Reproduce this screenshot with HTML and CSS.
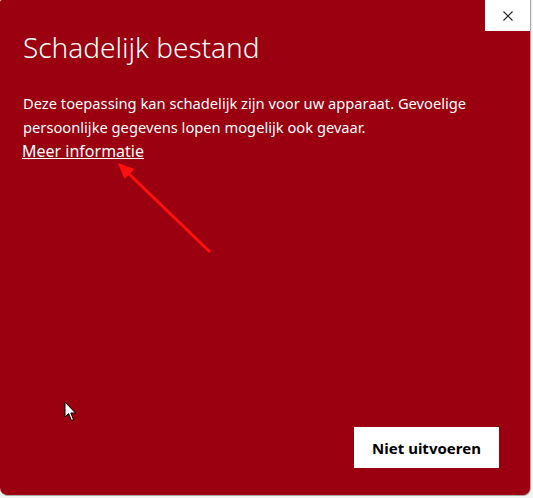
FILE: index.html
```html
<!DOCTYPE html>
<html lang="nl">
<head>
    <meta charset="UTF-8">
    <meta name="viewport" content="width=device-width, initial-scale=1.0">
    <title>Schadelijk bestand</title>
    <link rel="stylesheet" href="styles.css">
</head>
<body>
    <div class="dialog">
        <div class="titlebar">
            <button class="close-button" aria-label="Sluiten">
                <svg width="10" height="10" viewBox="0 0 10 10">
                    <path d="M0.5 0.5 L9.5 9.5 M9.5 0.5 L0.5 9.5" stroke="#1a1a1a" stroke-width="1.1" fill="none"/>
                </svg>
            </button>
        </div>

        <div class="content">
            <h1>Schadelijk bestand</h1>
            <p class="message">Deze toepassing kan schadelijk zijn voor uw apparaat. Gevoelige persoonlijke gegevens lopen mogelijk ook gevaar.</p>
            <a href="#" class="more-info">Meer informatie</a>
        </div>

        <div class="footer">
            <button class="run-button">Niet uitvoeren</button>
        </div>

        <!-- annotatie: pijl naar de link -->
        <svg class="arrow" width="100" height="96" viewBox="0 0 100 96">
            <line x1="95" y1="92" x2="13" y2="13" stroke="#ff0f0f" stroke-width="3"/>
            <polygon points="3,3 19.4,9.1 9.6,19.1" fill="#ff0f0f"/>
        </svg>

        <svg class="cursor" width="14" height="22" viewBox="0 0 14 22">
            <path d="M1 1 L1 16 L4.5 12.5 L7.5 19.5 L9.5 18.5 L6.8 12 L11.5 12 Z" fill="#fff" stroke="#000" stroke-width="1"/>
        </svg>
    </div>
</body>
</html>
```

FILE: styles.css
```css
* {
    margin: 0;
    padding: 0;
    box-sizing: border-box;
    font-family: 'Noto Sans', 'Open Sans', sans-serif;
}

body {
    background-color: #f3f3f3;
    width: 533px;
    height: 498px;
    overflow: hidden;
}

.dialog {
    position: relative;
    width: 531px;
    height: 496px;
    background-color: #9a000f;
    border-right: 1px solid #a9a9a9;
    border-bottom: 1px solid #a9a9a9;
    border-radius: 2px 0 8px 8px;
    display: flex;
    flex-direction: column;
}

.titlebar {
    display: flex;
    justify-content: flex-end;
}

.close-button {
    width: 45px;
    height: 31px;
    background-color: #fff;
    border: none;
    display: flex;
    align-items: center;
    justify-content: center;
}

.content {
    padding: 0 23px;
    color: #fff;
}

h1 {
    font-size: 28px;
    font-weight: 300;
    line-height: 32px;
    margin-bottom: 28px;
}

.message {
    font-size: 14.7px;
    line-height: 24px;
}

.more-info {
    color: #fff;
    font-size: 16px;
    line-height: 24px;
    margin-left: -1px;
}

.footer {
    margin-top: auto;
    display: flex;
    justify-content: flex-end;
    padding: 0 31px 27px 0;
}

.run-button {
    width: 145px;
    height: 41px;
    background-color: #fff;
    border: none;
    color: #000;
    font-size: 15px;
    font-weight: 700;
}

.arrow {
    position: absolute;
    left: 115px;
    top: 160px;
}

.cursor {
    position: absolute;
    left: 64px;
    top: 401px;
}
```
